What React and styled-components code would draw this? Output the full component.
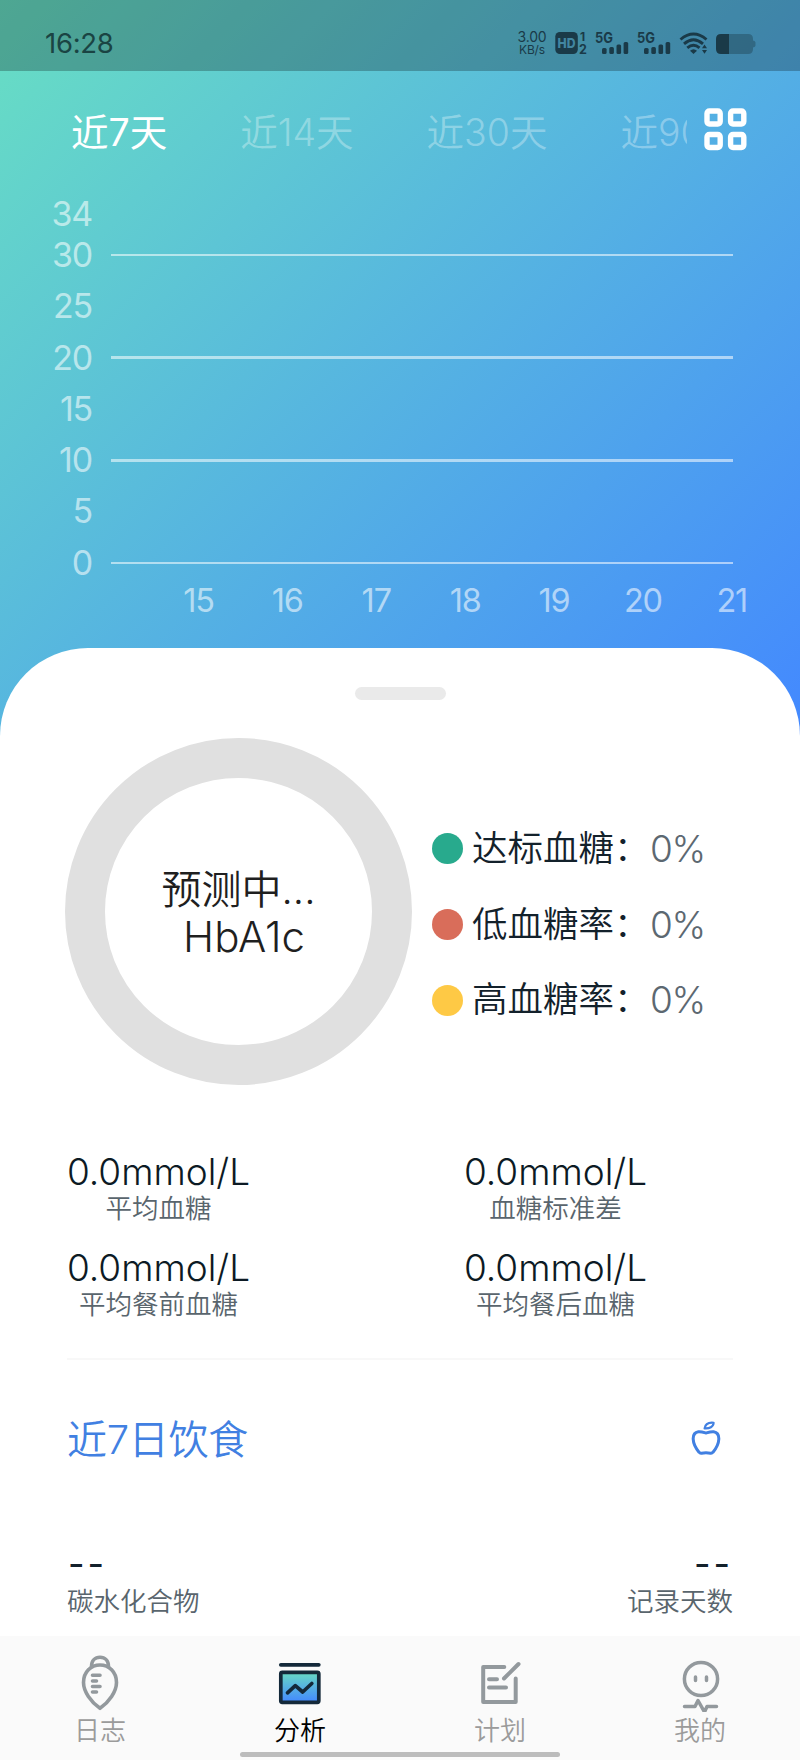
import React, { useState } from "react";
import styled, { createGlobalStyle } from "styled-components";

const GlobalStyle = createGlobalStyle`
  * {
    box-sizing: border-box;
  }
  body {
    margin: 0;
    background: #ffffff;
    font-family: Inter, "Noto Sans CJK SC", sans-serif;
    font-weight: 350;
  }
`;

const Page = styled.div`
  width: 800px;
  height: 1760px;
  display: flex;
  flex-direction: column;
  overflow: hidden;
  background: linear-gradient(135deg, #68dfc3 0%, #4388ff 100%) no-repeat;
  background-size: 800px 740px;
`;

const StatusBar = styled.header`
  height: 71px;
  flex: none;
  display: flex;
  align-items: center;
  padding: 15px 44px 0 45px;
  background: rgba(0, 0, 0, 0.25);
  color: #1a4443;
`;

const Clock = styled.span`
  flex: 1;
  font-size: 27.5px;
  font-weight: 400;
  line-height: 34px;
  letter-spacing: -0.3px;
`;

const Speed = styled.div`
  width: 34px;
  margin-right: 6px;
  text-align: center;
  font-size: 14px;
  font-weight: 400;
  line-height: 13px;
  letter-spacing: -0.2px;
  color: #1a3a48;
`;

const SpeedUnit = styled.div`
  font-size: 12px;
`;

const Toolbar = styled.div`
  height: 117px;
  flex: none;
  display: flex;
  align-items: center;
`;

const Tabs = styled.nav`
  width: 687px;
  height: 60px;
  display: flex;
  gap: 73px;
  margin-top: 6px;
  padding-left: 71px;
  overflow: hidden;
`;

const Tab = styled.button`
  flex: none;
  padding: 0;
  border: none;
  background: none;
  font-family: inherit;
  font-size: 37.5px;
  font-weight: ${({ $active }) => ($active ? 400 : 350)};
  line-height: 60px;
  white-space: nowrap;
  color: ${({ $active }) => ($active ? "#ffffff" : "rgba(255, 255, 255, 0.32)")};
  cursor: pointer;
`;

const GridButton = styled.button`
  margin-left: 17px;
  padding: 0;
  border: none;
  background: none;
  line-height: 0;
  cursor: pointer;
`;

const Chart = styled.section`
  height: 460px;
  flex: none;
  display: grid;
  grid-template-columns: 92px 622px;
  grid-template-rows: 392px 68px;
  column-gap: 19px;
  color: rgba(255, 255, 255, 0.56);
  font-size: 34px;
  font-weight: 400;
  letter-spacing: -1.2px;
`;

const YAxis = styled.div`
  display: flex;
  flex-direction: column;
  align-items: flex-end;
  padding-top: 5px;
`;

const YLabel = styled.span`
  height: ${({ $short }) => ($short ? 41 : 51.3)}px;
  flex: none;
  line-height: 41px;
`;

const Plot = styled.div`
  padding-top: 65.5px;
  display: flex;
  flex-direction: column;
  gap: 100.6px;
`;

const GridLine = styled.div`
  height: 2.3px;
  flex: none;
  background: rgba(255, 255, 255, 0.55);
`;

const XAxis = styled.div`
  grid-column: 2;
  display: grid;
  grid-template-columns: repeat(7, 88.9px);
  padding: 1px 0 0 43px;
  font-size: 32.5px;
  line-height: 40px;
  text-align: center;
`;

const Sheet = styled.main`
  flex: 1;
  display: flex;
  flex-direction: column;
  padding: 39px 67px 0;
  border-radius: 88px 88px 0 0;
  background: #ffffff;
`;

const Handle = styled.div`
  width: 91px;
  height: 13px;
  flex: none;
  align-self: center;
  border-radius: 7px;
  background: #eaeaea;
`;

const Summary = styled.section`
  display: flex;
  align-items: center;
  margin: 38px 0 0 -2px;
`;

const Ring = styled.div`
  width: 347px;
  height: 347px;
  flex: none;
  display: flex;
  flex-direction: column;
  align-items: center;
  justify-content: center;
  padding-top: 2px;
  border: 40px solid #e0e0e0;
  border-radius: 50%;
  font-size: 40px;
  line-height: 47px;
  color: #1f1f1f;
`;

const RingValue = styled.div`
  padding-left: 11px;
  font-size: 42px;
`;

const Legend = styled.ul`
  margin: 26px 0 0 20px;
  padding: 0;
  list-style: none;
`;

const LegendItem = styled.li`
  height: 75.6px;
  display: flex;
  align-items: center;
  white-space: nowrap;
`;

const Dot = styled.span`
  width: 31px;
  height: 31px;
  margin-right: 9px;
  border-radius: 50%;
  background: ${({ $color }) => $color};
`;

const LegendLabel = styled.span`
  width: 178px;
  font-size: 35.5px;
  line-height: 44px;
  color: #13212b;
`;

const LegendValue = styled.span`
  font-size: 37px;
  line-height: 44px;
  letter-spacing: -1.3px;
  color: #5c6871;
`;

const Stats = styled.section`
  display: grid;
  grid-template-columns: 183px 183px;
  column-gap: 214px;
  row-gap: 20px;
  margin-top: 67px;
`;

const Stat = styled.div`
  height: 75.5px;
  display: flex;
  flex-direction: column;
  align-items: center;
  white-space: nowrap;
`;

const StatValue = styled.div`
  font-size: 37px;
  line-height: 40px;
  color: #0c1a24;
`;

const Caption = styled.div`
  font-size: 26.5px;
  line-height: 33px;
  color: #59656d;
`;

const Divider = styled.hr`
  width: 100%;
  height: 2px;
  margin: 35px 0 0;
  border: none;
  background: #f8f8f8;
`;

const SectionHeader = styled.div`
  height: 60px;
  display: flex;
  align-items: center;
  justify-content: space-between;
  margin-top: 48px;
  padding-right: 12px;
`;

const SectionTitle = styled.h2`
  margin: 0 0 2px;
  font-size: 40px;
  font-weight: 350;
  letter-spacing: -0.3px;
  color: #4180e2;
`;

const DietRow = styled.div`
  display: flex;
  justify-content: space-between;
  margin-top: 75px;
`;

const DietItem = styled.div`
  display: flex;
  flex-direction: column;
  align-items: ${({ $end }) => ($end ? "flex-end" : "flex-start")};
`;

const DietValue = styled.div`
  padding-left: 1px;
  font-size: 36px;
  font-weight: 400;
  line-height: 42px;
  letter-spacing: 3px;
  color: #13212b;
`;

const BottomNav = styled.nav`
  height: 124px;
  flex: none;
  display: grid;
  grid-template-columns: repeat(4, 1fr);
  position: relative;
  padding-top: 16px;
  background: #fafafa;
`;

const NavItem = styled.a`
  display: flex;
  flex-direction: column;
  align-items: center;
  font-size: 26px;
  line-height: 37px;
  color: ${({ $active }) => ($active ? "#000000" : "#9b9b9b")};
`;

const HomeIndicator = styled.div`
  position: absolute;
  left: 240px;
  bottom: 3px;
  width: 320px;
  height: 5px;
  border-radius: 3px;
  background: #bcbcbc;
`;

const GLYPH = "#93999d";

const StatusIcons = () => (
  <svg width="201" height="28" viewBox="555 29 201 28" fill="#1a3a48">
    <rect x="555.3" y="32" width="22.5" height="22" rx="4.5" />
    <g fontFamily="Inter" fontWeight="700">
      <text x="557.5" y="48" fontSize="13.5" fontWeight="800" fill="#4286a1" textLength="18" lengthAdjust="spacingAndGlyphs">HD</text>
      <text x="580" y="41" fontSize="12">1</text>
      <text x="579" y="54" fontSize="12.5">2</text>
      <text x="595" y="43" fontSize="14.5" textLength="18" lengthAdjust="spacingAndGlyphs">5G</text>
      <text x="637" y="43" fontSize="14.5" textLength="18" lengthAdjust="spacingAndGlyphs">5G</text>
    </g>
    {[602, 644].map((x) => (
      <g key={x}>
        <rect x={x} y="48" width="4.6" height="6" rx="1.5" />
        <rect x={x + 7.3} y="47" width="4.6" height="7" rx="1.5" />
        <rect x={x + 14.5} y="44.5" width="4.6" height="9.5" rx="1.5" />
        <rect x={x + 21.6} y="42" width="4.6" height="12" rx="1.5" />
      </g>
    ))}
    <g fill="none" stroke="#1a3a48" strokeWidth="2.9">
      <path d="M680.5 39.5Q693.5 28.5 706.5 39.5" />
      <path d="M684 43.8Q693.5 35.5 703 43.8" />
      <path d="M687.3 47.8Q693.5 42.7 699.5 47.8" />
    </g>
    <path d="M693.5 54L690 50.8Q693.5 47.7 697 50.8Z" />
    <path d="M702 48.3L704.5 44.5L707 48.3ZM702 50L704.5 53.8L707 50Z" />
    <path d="M729 34h19q5 0 5 5v1.5q2.5.5 2.5 2v3q0 1.5-2.5 2v1.5q0 5-5 5h-19Z" fillOpacity="0.38" />
    <path d="M729 34h-8q-5 0-5 5v10q0 5 5 5h8Z" />
  </svg>
);

const GridIcon = () => (
  <svg width="43" height="43" viewBox="0 0 43 43" fill="none" stroke="#fff" strokeWidth="5.4">
    <rect x="3" y="3" width="13.2" height="13" rx="2.4" />
    <rect x="26.6" y="3" width="13.2" height="13" rx="2.4" />
    <rect x="3" y="26.5" width="13.2" height="13" rx="2.4" />
    <rect x="26.6" y="26.5" width="13.2" height="13" rx="2.4" />
  </svg>
);

const AppleIcon = () => (
  <svg width="30" height="34" viewBox="0 0 30 34" fill="none" stroke="#4180e2" strokeWidth="3" strokeLinejoin="round">
    <path d="M15 12C11 10.8 9.8 10.4 7.4 10.7C3.8 11.3 2 14.4 2.2 18.2C2.4 23 5.2 27.8 8 31.2C8.7 32.1 9.6 32.4 10.5 32.2Q15 31.3 19.5 32.2C20.4 32.4 21.3 32.1 22 31.2C24.8 27.8 27.6 23 27.8 18.2C28 14.4 26.2 11.3 22.6 10.7C20.2 10.4 19 10.8 15 12Z" />
    <path d="M13.6 7.4C14.2 3.4 17.4 1.3 22.6 1.8C22.5 5.8 18.5 7.8 13.6 7.4Z" strokeWidth="2.2" />
  </svg>
);

const LogIcon = () => (
  <svg width="60" height="60" viewBox="71 1652 60 60" fill="none" stroke={GLYPH} strokeWidth="3.6" strokeLinecap="round" strokeLinejoin="round">
    <path d="M101 1708.3C92 1702 84.5 1691.5 84.5 1682.5C84.5 1672 92 1665 101 1665S117.5 1672 117.5 1682.5C117.5 1691.5 110 1702 101 1708.3Z" />
    <path d="M92.5 1666.5C92.5 1660.5 96 1657.3 101 1657.3S109.5 1660.5 109.5 1666.5" />
    <path d="M93.5 1675.3H101M93.5 1681H97.5M93.5 1686.5H101M93.5 1692H97.5" />
  </svg>
);

const AnalysisIcon = () => (
  <svg width="60" height="60" viewBox="270 1652 60 60" fill="none" stroke="#14293a" strokeWidth="3.7" strokeLinecap="round" strokeLinejoin="round">
    <defs>
      <linearGradient id="analysisFill" x1="0" y1="0" x2="0" y2="1">
        <stop offset="0" stopColor="#68dac4" />
        <stop offset="1" stopColor="#4388ff" />
      </linearGradient>
    </defs>
    <path d="M280.8 1664.8H318.8" />
    <rect x="280.8" y="1672.3" width="38" height="30" rx="1.5" fill="url(#analysisFill)" />
    <path d="M287.5 1692.8L295.3 1685.6L302.7 1692L311.8 1683.5" />
  </svg>
);

const PlanIcon = () => (
  <svg width="60" height="60" viewBox="470 1652 60 60" fill="none" stroke={GLYPH} strokeWidth="4" strokeLinecap="round" strokeLinejoin="round">
    <path d="M504.3 1667H483.2V1702H515.7V1678.5" />
    <path d="M518.5 1664L504 1678.5M489 1679.2H497M489 1687.5H506" />
  </svg>
);

const MineIcon = () => (
  <svg width="60" height="60" viewBox="670 1652 60 60" fill="none" stroke={GLYPH} strokeWidth="3.5" strokeLinecap="round" strokeLinejoin="round">
    <circle cx="701" cy="1679" r="16.6" />
    <path d="M695.5 1677V1680.5M706.5 1677V1680.5" />
    <path d="M684.5 1706.5H695L698 1700.5L704.5 1712L707 1706.5H716.5" />
  </svg>
);

const ranges = ["近7天", "近14天", "近30天", "近90天"];
const yLabels = [34, 30, 25, 20, 15, 10, 5, 0];
const days = [15, 16, 17, 18, 19, 20, 21];
const legend = [
  { label: "达标血糖：", color: "#28aa8d" },
  { label: "低血糖率：", color: "#d96d5a" },
  { label: "高血糖率：", color: "#fec945" },
];
const stats = ["平均血糖", "血糖标准差", "平均餐前血糖", "平均餐后血糖"];
const navItems = [
  { label: "日志", Icon: LogIcon },
  { label: "分析", Icon: AnalysisIcon },
  { label: "计划", Icon: PlanIcon },
  { label: "我的", Icon: MineIcon },
];

const App = () => {
  const [range, setRange] = useState(ranges[0]);

  return (
    <>
      <GlobalStyle />
      <Page>
        <StatusBar>
          <Clock>16:28</Clock>
          <Speed>
            3.00
            <SpeedUnit>KB/s</SpeedUnit>
          </Speed>
          <StatusIcons />
        </StatusBar>
        <Toolbar>
          <Tabs>
            {ranges.map((item) => (
              <Tab key={item} $active={item === range} onClick={() => setRange(item)}>
                {item}
              </Tab>
            ))}
          </Tabs>
          <GridButton>
            <GridIcon />
          </GridButton>
        </Toolbar>
        <Chart>
          <YAxis>
            {yLabels.map((value, i) => (
              <YLabel key={value} $short={i === 0}>
                {value}
              </YLabel>
            ))}
          </YAxis>
          <Plot>
            <GridLine />
            <GridLine />
            <GridLine />
            <GridLine />
          </Plot>
          <XAxis>
            {days.map((day) => (
              <span key={day}>{day}</span>
            ))}
          </XAxis>
        </Chart>
        <Sheet>
          <Handle />
          <Summary>
            <Ring>
              <div>预测中...</div>
              <RingValue>HbA1c</RingValue>
            </Ring>
            <Legend>
              {legend.map(({ label, color }) => (
                <LegendItem key={label}>
                  <Dot $color={color} />
                  <LegendLabel>{label}</LegendLabel>
                  <LegendValue>0%</LegendValue>
                </LegendItem>
              ))}
            </Legend>
          </Summary>
          <Stats>
            {stats.map((label) => (
              <Stat key={label}>
                <StatValue>0.0mmol/L</StatValue>
                <Caption>{label}</Caption>
              </Stat>
            ))}
          </Stats>
          <Divider />
          <SectionHeader>
            <SectionTitle>近7日饮食</SectionTitle>
            <AppleIcon />
          </SectionHeader>
          <DietRow>
            <DietItem>
              <DietValue>--</DietValue>
              <Caption>碳水化合物</Caption>
            </DietItem>
            <DietItem $end>
              <DietValue>--</DietValue>
              <Caption>记录天数</Caption>
            </DietItem>
          </DietRow>
        </Sheet>
        <BottomNav>
          {navItems.map(({ label, Icon }) => (
            <NavItem key={label} $active={label === "分析"}>
              <Icon />
              {label}
            </NavItem>
          ))}
          <HomeIndicator />
        </BottomNav>
      </Page>
    </>
  );
};

export default App;
